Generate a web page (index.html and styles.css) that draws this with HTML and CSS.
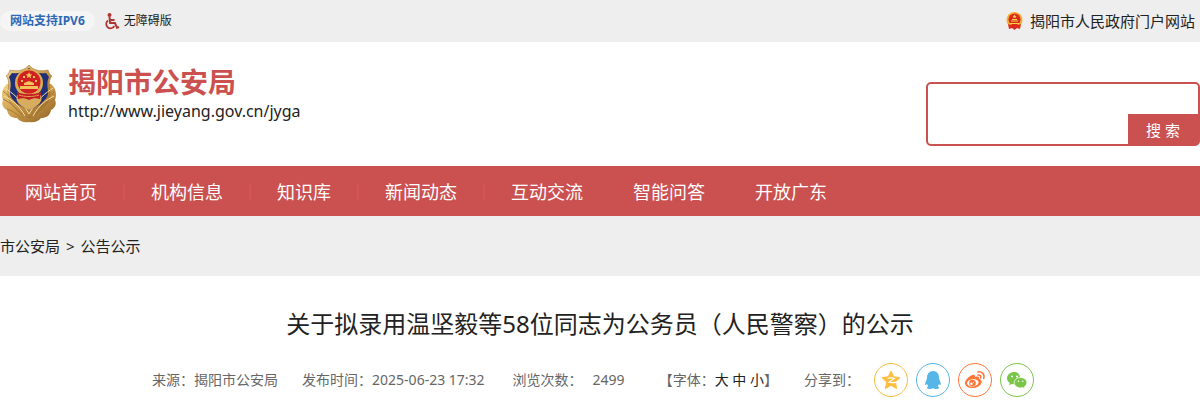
FILE: index.html
```
<!DOCTYPE html>
<html lang="zh-CN">

<head>
    <meta charset="UTF-8">
    <meta name="viewport" content="width=device-width, initial-scale=1.0">
    <title>揭阳市公安局</title>
    <link rel="stylesheet" href="styles.css">
</head>

<body>
    <div class="topbar">
        <a class="ipv6" href="#">网站支持IPV6</a>
        <a class="barrier-free" href="#">
            <svg width="16" height="18" viewBox="0 0 16 18" fill="none" stroke="#b03530" stroke-width="2">
                <circle cx="5.500" cy="3" r="2" fill="#b03530" stroke="none" />
                <path d="M5.500 5l.6 6h4.900l2 4.800 2-.8M6 8h4.500" />
                <path d="M4 8.500a4.300 4.300 0 1 0 6.300 5.500" stroke-width="1.700" />
            </svg>
            无障碍版
        </a>
        <a class="portal" href="#">
            <svg width="17" height="18" viewBox="0 0 17 18">
                <circle cx="8.500" cy="8" r="8" fill="#f3b13a" />
                <circle cx="8.500" cy="7.500" r="6" fill="#dc2a1c" />
                <path d="M2 12l3 1h7l3-1-1 5-3-1-2.500 2L6 16l-3 1z" fill="#dc2a1c" />
                <path d="M8.500 2.500l.6 1.300 1.400.1-1 1 .3 1.400-1.300-.7-1.300.7.300-1.400-1-1 1.400-.1zM5 8.500h7v1H5zM6 7h5v1H6zM4 11h9v1H4z" fill="#fbd24b" />
            </svg>
            揭阳市人民政府门户网站
        </a>
    </div>

    <header class="header">
        <a class="brand" href="#">
            <svg class="badge" width="58" height="60" viewBox="0 0 58 60">
                <defs>
                    <linearGradient id="gold" x1="0" y1="0" x2="1" y2="1">
                        <stop offset="0" stop-color="#f0d088" />
                        <stop offset=".5" stop-color="#c99a48" />
                        <stop offset="1" stop-color="#8d5e22" />
                    </linearGradient>
                </defs>
                <path d="M7 20C2 24 1 31 3 36c-2 4 0 8 4 10 1 6 5 8 10 8 3 4 8 5 12 4 4 1 9 0 12-4 5 0 9-2 10-8 4-2 6-6 4-10 2-5 1-12-4-16z" fill="url(#gold)" />
                <path d="M29 1c4 5 11 7 19 5 1 3 2 5 4 6-3 3-3 8-2 15 1 12-9 21-21 27C17 48 7 39 8 27c1-7 1-12-2-15 2-1 3-3 4-6 8 2 15 0 19-5z" fill="url(#gold)" stroke="#9a6a2b" stroke-width=".5" />
                <path d="M29 4c4 4 11 6 17 5l3 4c-2 4-2 8-1 14 1 8-7 14-19 19C17 41 9 35 10 27c1-6 1-10-1-14l3-4c6 1 13-1 17-5z" fill="#1f2f78" />
                <path d="M3 27c7 6 15 12 24 27M3 35c8 4 15 10 21 20M7 45c6 2 10 5 14 9M55 27c-7 6-15 12-24 27M55 35c-8 4-15 10-21 20M51 45c-6 2-10 5-14 9" fill="none" stroke="#a87a38" />
                <path d="M5 24c7 5 15 10 24 26 9-16 17-21 24-26M4 32c8 4 15 9 21 20M54 32c-8 4-15 9-21 20" fill="none" stroke="#f6dfa0" />
                <path d="M17 31c-2 6 1 10 12 15 11-5 14-9 12-15z" fill="#d7ad5d" />
                <circle cx="29" cy="19" r="14" fill="#d9ac55" />
                <circle cx="29" cy="18" r="11.500" fill="#d21f20" />
                <path d="M17 28c7 3 17 3 24 0l-1 7c-4-1-7-1-11 1-4-2-7-2-11-1z" fill="#c41c20" />
                <path d="M29 8l1 2.200 2.300.2-1.700 1.600.5 2.300-2.100-1.200-2.100 1.200.5-2.300-1.700-1.600 2.300-.2zM23 12h2v2h-2zM33 12h2v2h-2zM21 16h2v2h-2zM35 16h2v2h-2zM24 19l5-2 5 2v2H24zM20 22h18v3H20z" fill="#f1c35a" />
                <path d="M19 31c6 2 14 2 20 0" fill="none" stroke="#e1a04d" />
            </svg>
            <span class="brand-text">
                <strong class="site-name">揭阳市公安局</strong>
                <span class="site-url">http://www.jieyang.gov.cn/jyga</span>
            </span>
        </a>
        <form class="search">
            <input class="search-input" type="text" aria-label="搜索">
            <button class="search-btn" type="submit">搜 索</button>
        </form>
    </header>

    <nav class="nav">
        <a class="nav-item divided" href="#">网站首页</a>
        <a class="nav-item divided" href="#">机构信息</a>
        <a class="nav-item divided" href="#">知识库</a>
        <a class="nav-item divided" href="#">新闻动态</a>
        <a class="nav-item" href="#">互动交流</a>
        <a class="nav-item" href="#">智能问答</a>
        <a class="nav-item" href="#">开放广东</a>
    </nav>

    <div class="crumbs">
        <a href="#">市公安局</a>
        <span>&gt;</span>
        <a href="#">公告公示</a>
    </div>

    <main class="article">
        <h1 class="title">关于拟录用温坚毅等58位同志为公务员（人民警察）的公示</h1>
        <div class="meta">
            <span>来源：揭阳市公安局</span>
            <span class="date">发布时间：2025-06-23 17:32</span>
            <span class="views">浏览次数：<span class="count">2499</span></span>
            <span class="font-size">【字体：<a href="#">大</a> <a href="#">中</a> <a href="#">小</a>】</span>
            <span>分享到：</span>
            <div class="share">
                <a class="share-link qzone" href="#" aria-label="QQ空间">
                    <svg width="20" height="20" viewBox="0 0 20 20">
                        <path d="M10 1l2.700 5.800 6.300.8-4.600 4.400 1.200 6.500-5.600-3.100-5.600 3.100L5.600 12 1 7.600l6.300-.8z" fill="currentColor" stroke="currentColor" stroke-linejoin="round" />
                        <path d="M6.500 8.200c2.500-.4 4.500-.4 7 0L8 12.300c2.500.5 4.500.5 7.500-.2" fill="none" stroke="#fff" stroke-width="1.100" />
                    </svg>
                </a>
                <a class="share-link qq" href="#" aria-label="QQ">
                    <svg width="20" height="20" viewBox="0 0 20 20" fill="currentColor">
                        <path d="M10 1c4 0 6 3 6 7 0 1 .5 1.600.8 2.400.9 2 1.400 4 .7 4.600-.4.400-1-.4-1.500-1.200-.2 1-.7 1.900-1.400 2.500 1 .4 1.400.9 1.400 1.400 0 1.500-4.500 1.700-6 .3-1.500 1.400-6 1.200-6-.3 0-.5.400-1 1.400-1.400C4.700 15.700 4.200 14.800 4 13.800c-.5.8-1.100 1.600-1.500 1.200-.7-.6-.2-2.600.7-4.600C3.500 9.600 4 9 4 8c0-4 2-7 6-7z" />
                    </svg>
                </a>
                <a class="share-link weibo" href="#" aria-label="微博">
                    <svg width="22" height="20" viewBox="0 0 22 20">
                        <path d="M8.500 5c1.800-.6 2.900.2 2.400 2 2.900-1 5-.4 4.200 2 2 .6 2.900 1.800 2.500 3.500-.7 3-4.500 5.500-9 5.500C4.200 18 1 16 1 13c0-3 4-7 7.500-8z" fill="currentColor" />
                        <ellipse cx="8.800" cy="12.800" rx="5.800" ry="3.700" fill="#fff" transform="rotate(-8 8.800 12.800)" />
                        <circle cx="8.500" cy="13" r="3.300" fill="currentColor" />
                        <circle cx="7.500" cy="13.800" r="1.200" fill="#fff" />
                        <circle cx="9.600" cy="12.300" r=".6" fill="#fff" />
                        <path d="M14 2c4-.8 7 2.300 5.700 6.500M14 5c2-.4 3.300 1 2.700 3" fill="none" stroke="currentColor" stroke-width="1.500" stroke-linecap="round" />
                    </svg>
                </a>
                <a class="share-link wechat" href="#" aria-label="微信">
                    <svg width="22" height="20" viewBox="0 0 22 20">
                        <path d="M8.500 2C4.400 2 1 4.700 1 8.200c0 2 1 3.600 2.800 4.800L3 15.300l2.800-1.400c1 .3 2 .4 3 .4C16 14 16 2 8.500 2z" fill="currentColor" />
                        <path d="M14.500 7.500c-3.600 0-6.300 2.300-6.300 5.200s2.700 5.200 6.300 5.200c.8 0 1.500-.1 2.200-.3l2.300 1.200-.6-2c1.500-1 2.500-2.400 2.500-4.100 0-2.900-2.800-5.200-6.400-5.200z" fill="currentColor" stroke="#fff" stroke-width=".8" />
                        <g fill="#fff">
                            <circle cx="6" cy="6.500" r="1" />
                            <circle cx="11" cy="6.500" r="1" />
                            <circle cx="12.500" cy="11.300" r=".8" />
                            <circle cx="16.700" cy="11.300" r=".8" />
                        </g>
                    </svg>
                </a>
            </div>
        </div>
    </main>
</body>

</html>
```
FILE: styles.css
```
body {
    margin: 0;
    font-family: "Noto Sans", "Noto Sans CJK SC", sans-serif;
    color: #222;
    background-color: #fff;
}

a {
    color: inherit;
    text-decoration: none;
}

svg {
    flex: none;
}

.topbar {
    display: flex;
    align-items: center;
    height: 42px;
    padding-right: 5px;
    background-color: #eee;
    font-size: 12px;
    line-height: 20px;
}

.ipv6 {
    padding: 0 10px;
    border-radius: 10px;
    background-color: #f5f5f5;
    color: #2f68b5;
    font-weight: bold;
}

.barrier-free {
    display: flex;
    align-items: center;
    gap: 4px;
    margin-left: 9px;
}

.portal {
    display: flex;
    align-items: center;
    gap: 7px;
    margin-left: auto;
    font-size: 15px;
}

.header {
    display: flex;
    justify-content: space-between;
    padding: 20px 0;
}

.brand {
    display: flex;
    align-items: flex-start;
    gap: 10px;
}

.badge {
    margin-top: 2px;
}

.brand-text {
    display: flex;
    flex-direction: column;
}

.site-name {
    color: #cb5150;
    font-size: 28px;
    line-height: 40px;
}

.site-url {
    font-size: 16px;
    line-height: 18px;
}

.search {
    display: flex;
    flex-direction: column;
    width: 270px;
    margin-top: 20px;
    border: 2px solid #cb5150;
    border-radius: 5px;
}

.search-input {
    height: 30px;
    padding: 0 10px;
    border: none;
    outline: none;
    background: none;
    font: inherit;
}

.search-btn {
    align-self: flex-end;
    width: 70px;
    height: 30px;
    padding: 0;
    border: none;
    background-color: #cb5150;
    color: #fff;
    font-family: inherit;
    font-size: 15px;
    cursor: pointer;
}

.nav {
    display: flex;
    height: 50px;
    background-color: #cb5150;
    color: #fff;
    font-size: 18px;
    line-height: 52px;
}

.nav-item {
    padding: 0 25px;
}

.divided {
    display: flex;
    align-items: flex-start;
    padding-right: 0;
}

.divided::after {
    content: "";
    width: 2px;
    height: 16px;
    margin: 18px 1px 0 26px;
    background-color: #d45559;
}

.crumbs {
    display: flex;
    gap: 6px;
    background-color: #eee;
    font-size: 15px;
    line-height: 60px;
}

.article {
    padding: 28px 0 0;
}

.title {
    margin: 0;
    font-size: 24px;
    font-weight: normal;
    line-height: 40px;
    text-align: center;
}

.meta {
    display: flex;
    align-items: center;
    justify-content: center;
    gap: 24px;
    margin-top: 18px;
    padding-right: 14px;
    color: #666;
    font-size: 14px;
    line-height: 36px;
}

.views {
    margin-left: 4px;
}

.count {
    margin-left: 10px;
}

.font-size {
    margin: 0 2px 0 10px;
}

.font-size a {
    color: #222;
}

.share {
    display: flex;
    gap: 8px;
    margin-left: -10px;
}

.share-link {
    display: flex;
    align-items: center;
    justify-content: center;
    width: 32px;
    height: 32px;
    border: 1px solid currentColor;
    border-radius: 50%;
}

.qzone {
    color: #fbbe3f;
}

.qq {
    color: #56b6e7;
}

.weibo {
    color: #ff763b;
}

.wechat {
    color: #7bc549;
}
```
